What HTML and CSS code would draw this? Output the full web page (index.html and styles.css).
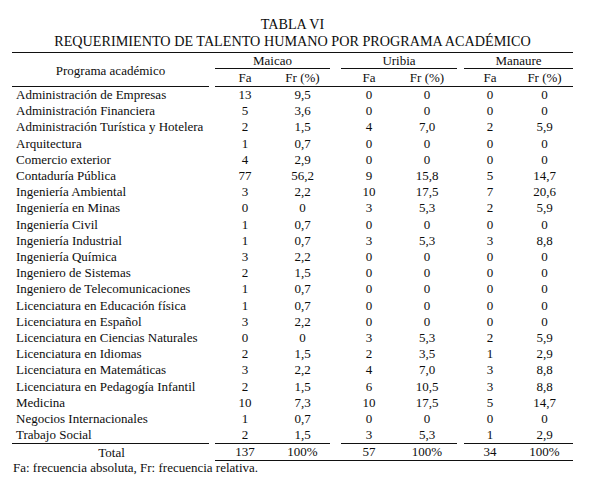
FILE: index.html
```html
<!DOCTYPE html>
<html lang="es">
<head>
<meta charset="utf-8">
<link rel="stylesheet" href="styles.css">
</head>
<body>
<div class="page">
  <div class="title">
    <div class="t1">TABLA VI</div>
    <div class="t2">REQUERIMIENTO DE TALENTO HUMANO POR PROGRAMA ACADÉMICO</div>
  </div>
  <table class="tbl">
    <colgroup>
      <col class="c-prog"><col class="c-gap1">
      <col class="c-fa1"><col class="c-fr1"><col class="c-gap2">
      <col class="c-fa2"><col class="c-fr2"><col class="c-gap3">
      <col class="c-fa3"><col class="c-fr3">
    </colgroup>
    <thead>
      <tr class="h1">
        <th rowspan="2" class="prog-h">Programa académico</th><th class="gap" rowspan="2"></th>
        <th colspan="2" class="grp">Maicao</th><th class="gap"></th>
        <th colspan="2" class="grp">Uribia</th><th class="gap"></th>
        <th colspan="2" class="grp">Manaure</th>
      </tr>
      <tr class="h2">
        <th class="sub">Fa</th><th class="sub">Fr (%)</th><th class="gap"></th>
        <th class="sub">Fa</th><th class="sub">Fr (%)</th><th class="gap"></th>
        <th class="sub">Fa</th><th class="sub">Fr (%)</th>
      </tr>
    </thead>
    <tbody>
      <tr><td class="prog">Administración de Empresas</td><td class="gap"></td><td>13</td><td>9,5</td><td class="gap"></td><td>0</td><td>0</td><td class="gap"></td><td>0</td><td>0</td></tr>
      <tr><td class="prog">Administración Financiera</td><td class="gap"></td><td>5</td><td>3,6</td><td class="gap"></td><td>0</td><td>0</td><td class="gap"></td><td>0</td><td>0</td></tr>
      <tr><td class="prog">Administración Turística y Hotelera</td><td class="gap"></td><td>2</td><td>1,5</td><td class="gap"></td><td>4</td><td>7,0</td><td class="gap"></td><td>2</td><td>5,9</td></tr>
      <tr><td class="prog">Arquitectura</td><td class="gap"></td><td>1</td><td>0,7</td><td class="gap"></td><td>0</td><td>0</td><td class="gap"></td><td>0</td><td>0</td></tr>
      <tr><td class="prog">Comercio exterior</td><td class="gap"></td><td>4</td><td>2,9</td><td class="gap"></td><td>0</td><td>0</td><td class="gap"></td><td>0</td><td>0</td></tr>
      <tr><td class="prog">Contaduría Pública</td><td class="gap"></td><td>77</td><td>56,2</td><td class="gap"></td><td>9</td><td>15,8</td><td class="gap"></td><td>5</td><td>14,7</td></tr>
      <tr><td class="prog">Ingeniería Ambiental</td><td class="gap"></td><td>3</td><td>2,2</td><td class="gap"></td><td>10</td><td>17,5</td><td class="gap"></td><td>7</td><td>20,6</td></tr>
      <tr><td class="prog">Ingeniería en Minas</td><td class="gap"></td><td>0</td><td>0</td><td class="gap"></td><td>3</td><td>5,3</td><td class="gap"></td><td>2</td><td>5,9</td></tr>
      <tr><td class="prog">Ingeniería Civil</td><td class="gap"></td><td>1</td><td>0,7</td><td class="gap"></td><td>0</td><td>0</td><td class="gap"></td><td>0</td><td>0</td></tr>
      <tr><td class="prog">Ingeniería Industrial</td><td class="gap"></td><td>1</td><td>0,7</td><td class="gap"></td><td>3</td><td>5,3</td><td class="gap"></td><td>3</td><td>8,8</td></tr>
      <tr><td class="prog">Ingeniería Química</td><td class="gap"></td><td>3</td><td>2,2</td><td class="gap"></td><td>0</td><td>0</td><td class="gap"></td><td>0</td><td>0</td></tr>
      <tr><td class="prog">Ingeniero de Sistemas</td><td class="gap"></td><td>2</td><td>1,5</td><td class="gap"></td><td>0</td><td>0</td><td class="gap"></td><td>0</td><td>0</td></tr>
      <tr><td class="prog">Ingeniero de Telecomunicaciones</td><td class="gap"></td><td>1</td><td>0,7</td><td class="gap"></td><td>0</td><td>0</td><td class="gap"></td><td>0</td><td>0</td></tr>
      <tr><td class="prog">Licenciatura en Educación física</td><td class="gap"></td><td>1</td><td>0,7</td><td class="gap"></td><td>0</td><td>0</td><td class="gap"></td><td>0</td><td>0</td></tr>
      <tr><td class="prog">Licenciatura en Español</td><td class="gap"></td><td>3</td><td>2,2</td><td class="gap"></td><td>0</td><td>0</td><td class="gap"></td><td>0</td><td>0</td></tr>
      <tr><td class="prog">Licenciatura en Ciencias Naturales</td><td class="gap"></td><td>0</td><td>0</td><td class="gap"></td><td>3</td><td>5,3</td><td class="gap"></td><td>2</td><td>5,9</td></tr>
      <tr><td class="prog">Licenciatura en Idiomas</td><td class="gap"></td><td>2</td><td>1,5</td><td class="gap"></td><td>2</td><td>3,5</td><td class="gap"></td><td>1</td><td>2,9</td></tr>
      <tr><td class="prog">Licenciatura en Matemáticas</td><td class="gap"></td><td>3</td><td>2,2</td><td class="gap"></td><td>4</td><td>7,0</td><td class="gap"></td><td>3</td><td>8,8</td></tr>
      <tr><td class="prog">Licenciatura en Pedagogía Infantil</td><td class="gap"></td><td>2</td><td>1,5</td><td class="gap"></td><td>6</td><td>10,5</td><td class="gap"></td><td>3</td><td>8,8</td></tr>
      <tr><td class="prog">Medicina</td><td class="gap"></td><td>10</td><td>7,3</td><td class="gap"></td><td>10</td><td>17,5</td><td class="gap"></td><td>5</td><td>14,7</td></tr>
      <tr><td class="prog">Negocios Internacionales</td><td class="gap"></td><td>1</td><td>0,7</td><td class="gap"></td><td>0</td><td>0</td><td class="gap"></td><td>0</td><td>0</td></tr>
      <tr class="last"><td class="prog">Trabajo Social</td><td class="gap"></td><td>2</td><td>1,5</td><td class="gap"></td><td>3</td><td>5,3</td><td class="gap"></td><td>1</td><td>2,9</td></tr>
    </tbody>
    <tfoot>
      <tr class="total"><td class="prog-total">Total</td><td class="gap nogap"></td><td>137</td><td>100%</td><td class="gap"></td><td>57</td><td>100%</td><td class="gap"></td><td>34</td><td>100%</td></tr>
    </tfoot>
  </table>
  <div class="note">Fa: frecuencia absoluta, Fr: frecuencia relativa.</div>
</div>
</body>
</html>
```

FILE: styles.css
```css
html, body {
  margin: 0;
  padding: 0;
  background: #ffffff;
}
body {
  font-family: "Liberation Serif", "Times New Roman", serif;
  color: #0d0d0d;
}
.page {
  padding: 16px 17px 0 12px;
}
.title {
  text-align: center;
  font-size: 14.2px;
  line-height: 17px;
  padding-left: 0;
}
.tbl {
  margin-top: 2px;
  border-collapse: separate;
  border-spacing: 0;
  table-layout: fixed;
  width: 561px;
  font-size: 13px;
  border-top: 1.4px solid #111;
}
.c-prog { width: 197px; }
.c-gap1 { width: 6px; }
.c-fa1 { width: 60px; }
.c-fr1 { width: 55px; }
.c-gap2 { width: 11px; }
.c-fa2 { width: 56px; }
.c-fr2 { width: 60px; }
.c-gap3 { width: 7px; }
.c-fa3 { width: 52px; }
.c-fr3 { width: 57px; }

th {
  font-weight: normal;
  padding: 0;
  text-align: center;
}
td {
  padding: 0;
  text-align: center;
  height: 16.2px;
  line-height: 16.2px;
  white-space: nowrap;
}
.h1 th { height: 15px; line-height: 15px; }
.h2 th { height: 17px; line-height: 17px; }
.grp { border-bottom: 1px solid #111; }
.sub, .prog-h { border-bottom: 1px solid #111; }
.h2 .gap { border-bottom: 1px solid #111; }
.prog-h { vertical-align: middle; padding-top: 1px; }
td.prog { text-align: left; padding-left: 4px; }
.last td { border-bottom: 1px solid #111; }
.last td.gap { border-bottom: none; }
.total td { height: 16px; line-height: 16px; border-bottom: 1px solid #111; }
.total td.prog-total { border-bottom: none; padding-left: 2px; }
.total td.nogap { border-bottom: none; }
.note {
  font-size: 13px;
  line-height: 14px;
  padding-left: 1px;
}
```
